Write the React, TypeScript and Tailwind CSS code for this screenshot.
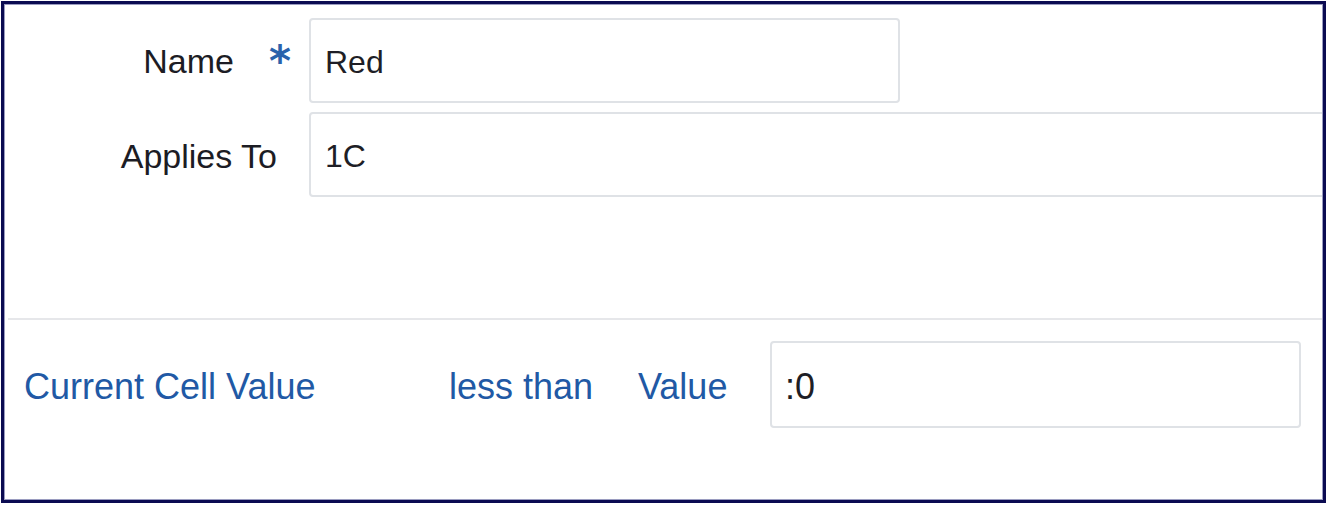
import React from "react";

export default function App() {
  const font = { fontFamily: '"Liberation Sans", Arial, sans-serif' };
  return (
    <div className="w-[1330px] h-[506px] bg-white" style={font}>
      <div className="ml-[1px] mt-[1px] w-[1325px] h-[502px] border-[3px] border-[#0b0b52] bg-white">
        <div className="w-full h-full border border-[#9a9cc0] overflow-hidden flex flex-col">
          {/* top section */}
          <div className="pt-[13px] flex flex-col gap-[9px]">
            <div className="flex items-center">
              <div className="w-[304px] shrink-0 flex justify-end items-center pr-[16px]">
                <span className="text-[34px] leading-none text-[#1c1c24]">Name</span>
                <span className="ml-[33px] w-[26px] text-center text-[42px] font-bold leading-none text-[#2a62ab] mt-[2px] font-['DejaVu_Sans']">*</span>
              </div>
              <div className="w-[591px] h-[85px] border-2 border-[#dfe2e6] rounded-[4px] flex items-center pl-[14px] shrink-0">
                <span className="text-[32px] leading-none text-[#1e1e26] mt-[3px]">Red</span>
              </div>
            </div>
            <div className="flex items-center">
              <div className="w-[304px] shrink-0 flex justify-end items-center pr-[32px]">
                <span className="text-[34px] leading-none text-[#1c1c24] mt-[2px]">Applies To</span>
              </div>
              <div className="w-[1100px] h-[85px] border-2 border-[#dfe2e6] rounded-[4px] flex items-center pl-[14px] shrink-0">
                <span className="text-[32px] leading-none text-[#1e1e26] mt-[2px]">1C</span>
              </div>
            </div>
          </div>
          {/* divider */}
          <div className="mt-[121px] h-[2px] bg-[#e6e7ea] ml-[3px]"></div>
          {/* bottom row */}
          <div className="mt-[21px] flex items-center">
            <span className="ml-[19px] w-[425px] shrink-0 text-[36px] leading-none text-[#2159a5] mt-[5px]">Current Cell Value</span>
            <span className="w-[189px] shrink-0 text-[36px] leading-none text-[#2159a5] mt-[5px]">less than</span>
            <span className="w-[132px] shrink-0 text-[36px] leading-none text-[#2159a5] mt-[5px]">Value</span>
            <div className="w-[531px] h-[87px] border-2 border-[#dfe2e6] rounded-[4px] flex items-center pl-[13px] shrink-0">
              <span className="text-[36px] leading-none text-[#1e1e26] mt-[5px]">:0</span>
            </div>
          </div>
        </div>
      </div>
    </div>
  );
}
